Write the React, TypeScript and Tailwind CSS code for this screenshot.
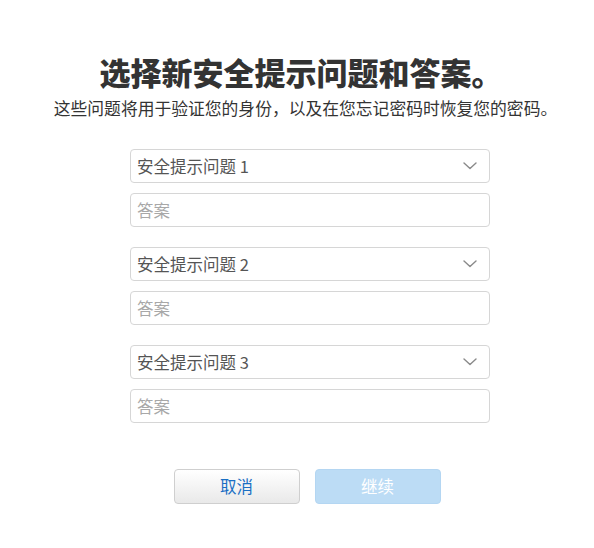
import React from "react";

const font = { fontFamily: '"Noto Sans CJK SC", "Liberation Sans", sans-serif' };

const Chevron = () => (
  <svg width="14" height="8" viewBox="0 0 14 8" fill="none" className="shrink-0">
    <path d="M1 1l6 5.5L13 1" stroke="#8a8a8a" strokeWidth="1.4" strokeLinecap="round" strokeLinejoin="round" />
  </svg>
);

const QuestionGroup = ({ n }: { n: number }) => (
  <div className="flex flex-col gap-[10px]">
    <div className="flex h-[34px] items-center justify-between rounded-[4px] border border-[#d6d6d6] bg-white pl-[6px] pr-[12px] text-[16.5px] text-[#555]">
      <span>安全提示问题 {n}</span>
      <Chevron />
    </div>
    <input
      placeholder="答案"
      className="h-[34px] rounded-[4px] border border-[#d6d6d6] bg-white px-[6px] text-[16.5px] text-[#333] outline-none placeholder:text-[#a8a8a8]"
      style={font}
    />
  </div>
);

export default function App() {
  return (
    <div className="min-h-[548px] w-full bg-white" style={font}>
      <div className="flex flex-col items-center pt-[50px]">
        <h1 className="ml-[8px] text-[31px] font-black leading-[44px] text-[#333]">选择新安全提示问题和答案。</h1>
        <p className="ml-[17px] mt-[2px] text-[16.8px] leading-[24px] text-[#333]">
          这些问题将用于验证您的身份，以及在您忘记密码时恢复您的密码。
        </p>
        <div className="ml-[26px] mt-[29px] flex w-[360px] flex-col gap-[20px]">
          <QuestionGroup n={1} />
          <QuestionGroup n={2} />
          <QuestionGroup n={3} />
        </div>
        <div className="ml-[20px] mt-[46px] flex gap-[15px]">
          <button className="h-[35px] w-[126px] rounded-[4px] border border-[#cfcfcf] bg-gradient-to-b from-white to-[#e9e9e9] text-[16.5px] text-[#1a6fc4]">
            取消
          </button>
          <button className="h-[35px] w-[126px] rounded-[4px] border border-[#b4d6f2] bg-[#bcdcf5] text-[16.5px] text-white">
            继续
          </button>
        </div>
      </div>
    </div>
  );
}
